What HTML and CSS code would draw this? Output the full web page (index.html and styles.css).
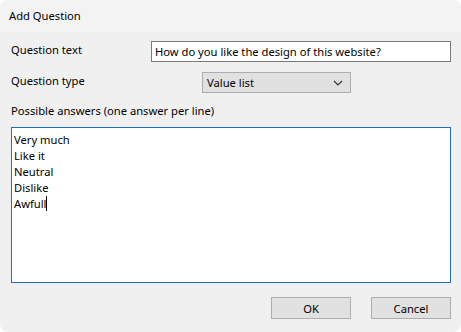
FILE: index.html
```html
<!doctype html>
<html lang="en">
  <head>
    <meta charset="UTF-8" />
    <title>Add Question</title>
    <link rel="stylesheet" href="styles.css">
  </head>
  <body>
    <div class="dialog">
      <div class="titlebar">Add Question</div>
      <div class="content">
        <div class="row">
          <label class="label">Question text</label>
          <div class="textbox">How do you like the design of this website?</div>
        </div>
        <div class="row">
          <label class="label">Question type</label>
          <div class="combo">
            <span>Value list</span>
            <svg width="10" height="6" viewBox="0 0 10 6">
              <path d="M1 1l4 4 4-4" fill="none" stroke="#333333" stroke-width="1.2" />
            </svg>
          </div>
        </div>
        <div class="answers-label">Possible answers (one answer per line)</div>
        <div class="answers">
          <div>Very much</div>
          <div>Like it</div>
          <div>Neutral</div>
          <div>Dislike</div>
          <div>Awfull<span class="caret"></span></div>
        </div>
        <div class="buttons">
          <button class="btn">OK</button>
          <button class="btn">Cancel</button>
        </div>
      </div>
    </div>
  </body>
</html>
```

FILE: styles.css
```css
* {
  margin: 0;
  padding: 0;
  box-sizing: border-box;
}

body {
  background: #ffffff;
  font-family: 'Noto Sans', 'Open Sans', sans-serif;
  font-size: 11.2px;
  color: #000000;
}

.dialog {
  width: 461px;
  height: 332px;
  background: #f0f0f0;
  border-radius: 8px;
  overflow: hidden;
}

.titlebar {
  height: 32px;
  padding: 8px 0 0 9px;
  background: #f3f3f3;
  line-height: 16px;
}

.content {
  padding: 9px 10px 0 11px;
}

.row {
  display: flex;
  align-items: center;
  height: 21px;
  margin-bottom: 10px;
}

.label {
  width: 140px;
  padding-bottom: 4px;
}

.textbox {
  flex: 1;
  height: 21px;
  background: #ffffff;
  border: 1px solid #7a7a7a;
  padding: 0 3px;
  line-height: 19px;
  white-space: nowrap;
}

.combo {
  width: 149px;
  height: 21px;
  margin-left: 51px;
  display: flex;
  align-items: center;
  justify-content: space-between;
  background: #e1e1e1;
  border: 1px solid #adadad;
  padding: 0 7px 0 4px;
}

.answers-label {
  height: 16px;
  line-height: 16px;
  margin: 2px 0 8px;
}

.answers {
  height: 156px;
  background: #ffffff;
  border: 1px solid #1e6fc2;
  padding: 4px 2px;
  line-height: 16px;
}

.caret {
  display: inline-block;
  width: 1px;
  height: 15px;
  background: #000000;
  vertical-align: -3px;
}

.buttons {
  display: flex;
  justify-content: flex-end;
  gap: 20px;
  margin-top: 14px;
}

.btn {
  width: 80px;
  height: 22px;
  background: #e1e1e1;
  border: 1px solid #adadad;
  font-family: inherit;
  font-size: 11.2px;
  color: #000000;
}
```
